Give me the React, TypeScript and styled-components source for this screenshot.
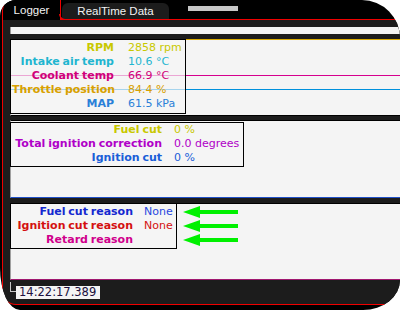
import React from 'react';
import styled, { createGlobalStyle } from 'styled-components';

const Global = createGlobalStyle`
  html, body { margin: 0; padding: 0; background: #ffffff; }
  body { width: 400px; height: 310px; overflow: hidden; }
`;

const Window = styled.div`
  width: 400px;
  height: 310px;
  background: #000;
  overflow: hidden;
  border-radius: 16px 38px 37px 20px / 16px 38px 30px 42px;
  display: flex;
  flex-direction: column;
  font-family: "DejaVu Sans", Verdana, sans-serif;
`;

const TabRow = styled.div`
  height: 19px;
  flex: none;
  display: flex;
  align-items: flex-end;
  padding-left: 2px;
  font-family: "Liberation Sans", Arial, sans-serif;
  font-size: 11.5px;
  color: #f2f2f2;
`;

const ActiveTab = styled.div`
  position: relative;
  z-index: 2;
  box-sizing: border-box;
  width: 59px;
  height: 20px;
  margin-bottom: -1px;
  background: #000;
  border-left: 1px solid #f00000;
  border-right: 1px solid #f00000;
  border-top-left-radius: 10px;
  padding-top: 4px;
  line-height: 13px;
  text-align: center;
  &::after {
    content: '';
    position: absolute;
    left: calc(100% - 1px);
    top: 14px;
    width: 6px;
    height: 6px;
    box-sizing: border-box;
    border-left: 1px solid #f00000;
    border-bottom: 1px solid #f00000;
    border-bottom-left-radius: 6px;
  }
`;

const Tab = styled.div`
  box-sizing: border-box;
  width: 107px;
  height: 16px;
  margin-left: 1px;
  background: #1c1c1c;
  border-radius: 6px 6px 0 0;
  line-height: 16px;
  text-align: center;
`;

const GrayBar = styled.div`
  width: 50px;
  height: 5px;
  margin-left: 19px;
  align-self: flex-start;
  margin-top: 6px;
  background: #c6c6c6;
`;

const Content = styled.div`
  flex: none;
  height: 286px;
  box-sizing: border-box;
  margin-left: 2px;
  border: 1px solid #f00000;
  border-right: none;
  border-bottom-left-radius: 14px;
  background: #1c1c1c;
  padding: 7px 0 0 7px;
  display: flex;
  flex-direction: column;
`;

const Ruler = styled.div`
  height: 7px;
  flex: none;
  background: #f4f4f4;
  border-left: 1px solid #9a9a9a;
  margin-bottom: 5px;
`;

const Chart = styled.div<{ $top: string; $bottom: string; $h: number; $mt: number }>`
  position: relative;
  flex: none;
  height: ${(p) => p.$h}px;
  margin-top: ${(p) => p.$mt}px;
  background: #f4f4f4;
  border-left: 1px solid #a0a0a0;
  border-top: 1px solid ${(p) => p.$top};
  border-bottom: 1px solid ${(p) => p.$bottom};
`;

const Traces = styled.svg`
  position: absolute;
  left: 0;
  top: 0;
  display: block;
`;

const Overlay = styled.div<{ $top: number }>`
  position: absolute;
  left: -1px;
  top: ${(p) => p.$top}px;
  display: flex;
  align-items: flex-start;
  gap: 6px;
`;

const Panel = styled.div<{ $w: number; $label: number; $gap: number; $pt: number; $pb: number }>`
  box-sizing: border-box;
  width: ${(p) => p.$w}px;
  border: 1px solid #000;
  background: rgba(244, 244, 244, 0.68);
  padding: ${(p) => p.$pt}px 0 ${(p) => p.$pb}px 1px;
  display: grid;
  grid-template-columns: ${(p) => p.$label}px 1fr;
  column-gap: ${(p) => p.$gap}px;
  grid-auto-rows: 14px;
  font-size: 11px;
  line-height: 14px;
`;

const Label = styled.span<{ $c: string }>`
  font-weight: bold;
  text-align: right;
  white-space: nowrap;
  word-spacing: -1px;
  color: ${(p) => p.$c};
`;

const Value = styled.span<{ $c: string }>`
  white-space: nowrap;
  color: ${(p) => p.$c};
`;

const ArrowCol = styled.div`
  padding-top: 2px;
  display: flex;
  flex-direction: column;
`;

const Arrow = styled.svg`
  display: block;
  width: 55px;
  height: 14px;
`;

const Footer = styled.div`
  flex: 1;
  display: flex;
  align-items: flex-start;
  padding-top: 6px;
`;

const Corner = styled.div`
  box-sizing: border-box;
  width: 6px;
  height: 10px;
  margin-top: -4px;
  border-left: 1px solid #c8c8c8;
  border-bottom: 1px solid #c8c8c8;
`;

const Stamp = styled.div`
  height: 13px;
  padding: 0 4px 0 3px;
  background: #f4f4f4;
  color: #201040;
  font-size: 11.5px;
  line-height: 13px;
`;

type Row = { label: string; value: string; c: string; vc?: string };

const panel1: Row[] = [
  { label: 'RPM', value: '2858 rpm', c: '#c8c800' },
  { label: 'Intake air temp', value: '10.6 °C', c: '#1fb5d0' },
  { label: 'Coolant temp', value: '66.9 °C', c: '#d0007a' },
  { label: 'Throttle position', value: '84.4 %', c: '#d8a000' },
  { label: 'MAP', value: '61.5 kPa', c: '#2a80d8' },
];

const panel2: Row[] = [
  { label: 'Fuel cut', value: '0 %', c: '#c8c800' },
  { label: 'Total ignition correction', value: '0.0 degrees', c: '#b000c8' },
  { label: 'Ignition cut', value: '0 %', c: '#1a5ed8' },
];

const panel3: Row[] = [
  { label: 'Fuel cut reason', value: 'None', c: '#1428d0', vc: '#2848e0' },
  { label: 'Ignition cut reason', value: 'None', c: '#d41010' },
  { label: 'Retard reason', value: '', c: '#d0008c' },
];

const Rows = ({ rows }: { rows: Row[] }) => (
  <>
    {rows.map((r) => (
      <React.Fragment key={r.label}>
        <Label $c={r.c}>{r.label}</Label>
        <Value $c={r.vc ?? r.c}>{r.value}</Value>
      </React.Fragment>
    ))}
  </>
);

const GreenArrow = () => (
  <Arrow viewBox="0 0 55 14">
    <polygon points="0,7 17,1 17,5 55,5 55,9 17,9 17,13" fill="#00f000" />
  </Arrow>
);

export default function App() {
  return (
    <>
      <Global />
      <Window>
        <TabRow>
          <ActiveTab>Logger</ActiveTab>
          <Tab>RealTime Data</Tab>
          <GrayBar />
        </TabRow>
        <Content>
          <Ruler />
          <Chart $top="#d8a800" $bottom="#000" $h={75} $mt={0}>
            <Traces width="390" height="75" viewBox="0 0 390 75">
              <rect x="0" y="35" width="390" height="1" fill="#d6008e" />
              <rect x="0" y="49" width="390" height="1" fill="#0090dc" />
            </Traces>
            <Overlay $top={-1}>
              <Panel $w={176} $label={102} $gap={14} $pt={1} $pb={2}>
                <Rows rows={panel1} />
              </Panel>
            </Overlay>
          </Chart>
          <Chart $top="#000" $bottom="#2050c8" $h={76} $mt={4}>
            <Overlay $top={1}>
              <Panel $w={234} $label={150} $gap={12} $pt={0} $pb={1}>
                <Rows rows={panel2} />
              </Panel>
            </Overlay>
          </Chart>
          <Chart $top="#000" $bottom="#a01870" $h={75} $mt={5}>
            <Overlay $top={-1}>
              <Panel $w={167} $label={121} $gap={11} $pt={1} $pb={1}>
                <Rows rows={panel3} />
              </Panel>
              <ArrowCol>
                <GreenArrow />
                <GreenArrow />
                <GreenArrow />
              </ArrowCol>
            </Overlay>
          </Chart>
          <Footer>
            <Corner />
            <Stamp>14:22:17.389</Stamp>
          </Footer>
        </Content>
      </Window>
    </>
  );
}
